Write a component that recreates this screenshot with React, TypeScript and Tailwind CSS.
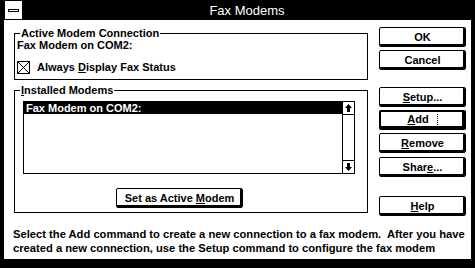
import React from "react";

const F = "font-['Liberation_Sans',Arial,sans-serif]";

function Btn({
  children,
  className = "",
}: {
  children: React.ReactNode;
  className?: string;
}) {
  return (
    <div
      className={`h-[20px] flex items-center justify-center border border-black rounded-[2px] shadow-[inset_-2px_-2px_0_#000] bg-white text-[11px] font-bold text-black leading-none ${className}`}
    >
      {children}
    </div>
  );
}

function ArrowUp() {
  return (
    <svg width="7" height="8" viewBox="0 0 7 8">
      <path d="M3.5 0 L7 4 L5 4 L5 8 L2 8 L2 4 L0 4 Z" fill="#000" />
    </svg>
  );
}

function ArrowDown() {
  return (
    <svg width="7" height="8" viewBox="0 0 7 8">
      <path d="M3.5 8 L7 4 L5 4 L5 0 L2 0 L2 4 L0 4 Z" fill="#000" />
    </svg>
  );
}

export default function App() {
  return (
    <div className={`w-[475px] h-[268px] bg-black flex flex-col ${F} text-black select-none`}>
      {/* title bar */}
      <div className="h-[19px] flex pt-[1px] pl-[5px] pr-[4px]">
        <div className="w-[17px] h-[18px] bg-white flex items-center justify-center">
          <div className="w-[11px] h-[3px] border border-black bg-white"></div>
        </div>
        <div className="flex-1 flex items-center justify-center text-white text-[13px] leading-none ml-[1px]">
          Fax Modems
        </div>
      </div>
      {/* body */}
      <div className="flex-1 bg-white ml-[4px] mr-[4px] mb-[9px] mt-[1px] flex flex-col">
        <div className="flex">
          {/* left column */}
          <div className="w-[354px] ml-[10px] pt-[13px] flex flex-col">
            {/* group 1 */}
            <div className="relative h-[47px] border border-black">
              <div className="absolute left-[5px] -top-[6px] bg-white px-[1px] text-[11px] font-bold leading-[11px]">
                Active Modem Connection
              </div>
              <div className="pl-[2px] pt-[5px] text-[11px] font-bold leading-[13px]">
                Fax Modem on COM2:
              </div>
              <div className="flex items-center pl-[2px] mt-[9px]">
                <div className="w-[13px] h-[13px] border border-black">
                  <svg width="11" height="11" viewBox="0 0 11 11" className="block">
                    <path d="M0 0 L11 11 M11 0 L0 11" stroke="#000" strokeWidth="1" />
                  </svg>
                </div>
                <div className="ml-[7px] text-[11px] font-bold leading-[13px]">
                  Always <span className="underline">D</span>isplay Fax Status
                </div>
              </div>
            </div>
            {/* group 2 */}
            <div className="relative h-[123px] border border-black mt-[10px]">
              <div className="absolute left-[5px] -top-[6px] bg-white px-[1px] text-[11px] font-bold leading-[11px]">
                <span className="underline">I</span>nstalled Modems
              </div>
              <div className="ml-[8px] mt-[10px] w-[332px] h-[73px] border border-black flex">
                <div className="flex-1">
                  <div className="h-[12px] bg-black text-white text-[11px] font-bold leading-[12px] pl-[2px]">
                    Fax Modem on COM2:
                  </div>
                </div>
                <div className="w-[12px] border-l border-black flex flex-col justify-between">
                  <div className="h-[13px] border-b border-black flex items-center justify-center">
                    <ArrowUp />
                  </div>
                  <div className="h-[13px] border-t border-black flex items-center justify-center">
                    <ArrowDown />
                  </div>
                </div>
              </div>
              <Btn className="ml-[101px] mt-[14px] w-[127px]">
                Set as Active <span className="underline ml-[3px]">M</span>odem
              </Btn>
            </div>
          </div>
          {/* right column */}
          <div className="w-[87px] ml-[11px] pt-[7px] flex flex-col">
            <Btn>OK</Btn>
            <Btn className="mt-[3px]">Cancel</Btn>
            <Btn className="mt-[17px]">
              <span className="underline">S</span>etup...
            </Btn>
            <Btn className="mt-[3px] border-2">
              <span className="inline-block border-r border-b border-dotted border-black pr-[8px] pb-[1px]">
                <span className="underline">A</span>dd
              </span>
            </Btn>
            <Btn className="mt-[3px]">
              <span className="underline">R</span>emove
            </Btn>
            <Btn className="mt-[4px]">
              Shar<span className="underline">e</span>...
            </Btn>
            <Btn className="mt-[19px]">
              <span className="underline">H</span>elp
            </Btn>
          </div>
        </div>
        <div className="ml-[9px] mt-[11px] text-[11.2px] font-bold leading-[14px] whitespace-pre">
          {"Select the Add command to create a new connection to a fax modem.  After you have\ncreated a new connection, use the Setup command to configure the fax modem"}
        </div>
      </div>
    </div>
  );
}
